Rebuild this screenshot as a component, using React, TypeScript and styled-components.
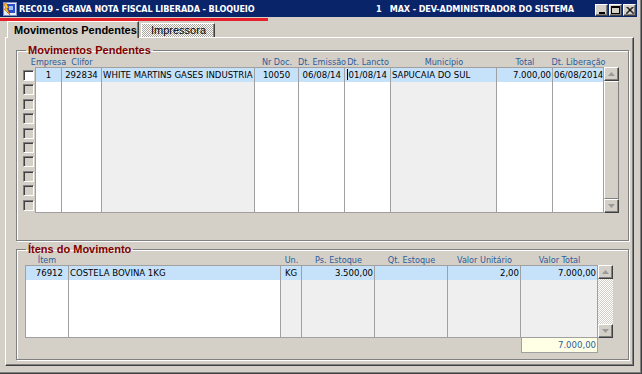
import React from 'react';
import styled, { createGlobalStyle } from 'styled-components';

const CONDENSED = '"DejaVu Sans Condensed", "Liberation Sans", Arial, sans-serif';
const SANS = '"Liberation Sans", Arial, sans-serif';

const GlobalStyle = createGlobalStyle`
	html, body {
		margin: 0;
		padding: 0;
		background: #d4d0c8;
	}
	body {
		font-family: ${CONDENSED};
		font-size: 9.5px;
		color: #000;
	}
	* {
		box-sizing: border-box;
	}
`;

const SWindow = styled.div`
	width: 642px;
	height: 374px;
	background: #d4d0c8;
	display: flex;
	flex-direction: column;
	padding: 0 4px 7px 0;
	border-right: 1px solid #404040;
	border-bottom: 1px solid #404040;
	box-shadow: inset -1px -1px 0 #808080;
	overflow: hidden;
`;

const STitleBar = styled.div`
	height: 17px;
	flex: none;
	background: #0a246a;
	display: flex;
	align-items: center;
	padding-left: 3px;
	color: #fff;
	font-family: ${CONDENSED};
	font-weight: 700;
	font-size: 9px;
	letter-spacing: -0.1px;
	white-space: pre;
`;

const STitleText = styled.span`
	margin-left: 2px;
`;

const STitleUser = styled.span`
	margin-left: auto;
`;

const SWinButtons = styled.div`
	display: flex;
	gap: 1px;
	margin-left: 21px;
	margin-right: 1px;
	align-self: flex-end;
	margin-bottom: 1px;
`;

const SWinButton = styled.div`
	width: 13px;
	height: 12px;
	background: #d4d0c8;
	border-top: 1px solid #fff;
	border-left: 1px solid #fff;
	border-right: 1px solid #404040;
	border-bottom: 1px solid #404040;
	box-shadow: inset -1px -1px 0 #808080;
	display: flex;
	align-items: center;
	justify-content: center;
`;

const SProgressRow = styled.div`
	height: 4px;
	flex: none;
	padding-top: 1px;
`;

const SProgressBar = styled.div<{ $width: number }>`
	width: ${p => p.$width}px;
	height: 3px;
	background: #e3202b;
`;

const STabs = styled.div`
	height: 16px;
	flex: none;
	display: flex;
	align-items: flex-end;
	padding-left: 7px;
`;

const STab = styled.div<{ $active?: boolean }>`
	position: relative;
	z-index: ${p => (p.$active ? 1 : 0)};
	height: ${p => (p.$active ? '17px' : '14px')};
	margin-bottom: ${p => (p.$active ? '-1px' : '0')};
	margin-left: ${p => (p.$active ? '0' : '2px')};
	width: ${p => (p.$active ? '132px' : '74px')};
	padding-left: ${p => (p.$active ? '6px' : '9px')};
	padding-top: ${p => (p.$active ? '2px' : '0')};
	font-family: ${SANS};
	font-weight: ${p => (p.$active ? 700 : 400)};
	font-size: 11px;
	line-height: 13px;
	white-space: nowrap;
	border-top: 1px solid #fff;
	border-left: 1px solid #fff;
	border-right: 1px solid #404040;
	box-shadow: inset -1px 0 0 #808080;
	background: ${p =>
		p.$active ? '#d4d0c8' : 'repeating-conic-gradient(#ffffff 0 25%, #a8a49c 0 50%) 0 0 / 2px 2px'};
`;

const SPanel = styled.div`
	flex: 1;
	margin-left: 5px;
	margin-right: 3px;
	border-top: 1px solid #fff;
	border-left: 1px solid #fff;
	border-right: 1px solid #404040;
	border-bottom: 1px solid #404040;
	box-shadow: inset -1px -1px 0 #808080;
	padding: 6px 4px 0 10px;
	display: flex;
	flex-direction: column;
	gap: 2px;
`;

const SGroup = styled.fieldset<{ $height: number }>`
	margin: 0;
	min-width: 0;
	height: ${p => p.$height}px;
	padding: 0;
	border: 1px solid #808080;
	box-shadow: 1px 1px 0 #fff, inset 1px 1px 0 #fff;
`;

const SLegend = styled.legend`
	margin-left: 9px;
	padding: 0 2px;
	font-family: ${SANS};
	font-weight: 700;
	font-size: 11px;
	line-height: 12px;
	color: #800000;
`;

const SGrid = styled.div<{ $cols: string; $rows: string; $indent: number }>`
	display: grid;
	margin-left: ${p => p.$indent}px;
	grid-template-columns: ${p => p.$cols};
	grid-template-rows: ${p => p.$rows};
`;

const SHead = styled.div<{ $col: number }>`
	grid-column: ${p => p.$col};
	grid-row: 1;
	display: flex;
	justify-content: center;
	align-items: flex-end;
	white-space: nowrap;
	font-size: 9px;
	color: #2b5d9c;
	line-height: 10px;
`;

type Tone = 'white' | 'grey' | 'sel' | 'total';
const toneBg: Record<Tone, string> = {
	white: '#ffffff',
	grey: '#efefef',
	sel: '#c6e2fa',
	total: '#ffffe6',
};

const SCell = styled.div<{
	$tone: Tone;
	$align?: 'left' | 'center' | 'right';
	$first?: boolean;
	$top?: boolean;
	$bottom?: boolean;
	$pad?: number;
}>`
	background: ${p => toneBg[p.$tone]};
	border-right: 1px solid #a0a0a0;
	border-left: ${p => (p.$first ? '1px solid #a0a0a0' : 'none')};
	border-top: ${p => (p.$top ? '1px solid #a0a0a0' : 'none')};
	border-bottom: ${p => (p.$bottom ? '1px solid #a0a0a0' : 'none')};
	text-align: ${p => p.$align || 'left'};
	padding: 0 ${p => (p.$align === 'right' ? p.$pad ?? 1 : 1)}px 0
		${p => (p.$align === 'left' || !p.$align ? p.$pad ?? 1 : 1)}px;
	line-height: 13px;
	white-space: nowrap;
	overflow: hidden;
	color: ${p => (p.$tone === 'total' ? '#2b5d9c' : '#000')};
`;

const SCaret = styled.span`
	border-left: 1px solid #000;
	margin-right: 1px;
`;

const SChecks = styled.div`
	grid-column: 1;
	grid-row: 2 / 4;
	display: flex;
	flex-direction: column;
	gap: 3.4px;
	padding-top: 3px;
`;

const SCheck = styled.div<{ $on?: boolean }>`
	width: 11px;
	height: 11px;
	border-top: 1px solid #808080;
	border-left: 1px solid #808080;
	border-right: 1px solid #fff;
	border-bottom: 1px solid #fff;
	box-shadow: inset 1px 1px 0 #404040;
	background: ${p => (p.$on ? '#fff' : '#d4d0c8')};
`;

const SScroll = styled.div<{ $col: number }>`
	grid-column: ${p => p.$col};
	grid-row: 2 / 4;
	display: flex;
	flex-direction: column;
`;

const SScrollBtn = styled.div`
	height: 14px;
	flex: none;
	background: #d4d0c8;
	border-top: 1px solid #fff;
	border-left: 1px solid #fff;
	border-right: 1px solid #404040;
	border-bottom: 1px solid #404040;
	box-shadow: inset -1px -1px 0 #808080;
	display: flex;
	align-items: center;
	justify-content: center;
`;

const SScrollThumb = styled.div`
	flex: 1;
	background: #d4d0c8;
	border-top: 1px solid #fff;
	border-left: 1px solid #fff;
	border-right: 1px solid #808080;
	border-bottom: 1px solid #808080;
`;

const SScrollTrack = styled.div`
	flex: 1;
	background: repeating-conic-gradient(#ffffff 0 25%, #d4d0c8 0 50%) 0 0 / 2px 2px;
`;

const SBlank = styled.div<{ $cols: string; $row: number }>`
	grid-column: ${p => p.$cols};
	grid-row: ${p => p.$row};
`;

const Arrow: React.FC<{ down?: boolean }> = ({ down }) => (
	<svg width="7" height="4" viewBox="0 0 7 4">
		<polygon points={down ? '0,0 7,0 3.5,4' : '3.5,0 7,4 0,4'} fill="#9a9a9a" />
	</svg>
);

const AppIcon = () => (
	<svg width="14" height="14" viewBox="0 0 14 14">
		<rect x="0.5" y="0.5" width="13" height="13" fill="#e8ecf8" stroke="#8090c0" />
		<rect x="4" y="2" width="8" height="9" fill="#2c4cc8" />
		<rect x="6" y="4" width="4" height="4" fill="#9fc0ff" />
		<polygon points="3,1 6,6 4,6 7,13 1,7 3,7 1,2" fill="#f0d020" stroke="#c03010" strokeWidth="0.5" />
	</svg>
);

type Col = {
	head: string;
	width: number;
	tone: 'white' | 'grey';
	align: 'left' | 'center' | 'right';
	value: React.ReactNode;
	pad?: number;
};

const pendentes: Col[] = [
	{ head: 'Empresa', width: 27, tone: 'white', align: 'center', value: '1' },
	{ head: 'Clifor', width: 40, tone: 'white', align: 'center', value: '292834' },
	{ head: '', width: 153, tone: 'grey', align: 'left', value: 'WHITE MARTINS GASES INDUSTRIA' },
	{ head: 'Nr Doc.', width: 44, tone: 'white', align: 'center', value: '10050' },
	{ head: 'Dt. Emissão', width: 46, tone: 'white', align: 'right', value: '06/08/14', pad: 3 },
	{
		head: 'Dt. Lancto',
		width: 46,
		tone: 'white',
		align: 'right',
		value: (
			<>
				<SCaret />
				01/08/14
			</>
		),
		pad: 3,
	},
	{ head: 'Município', width: 106, tone: 'grey', align: 'left', value: 'SAPUCAIA DO SUL' },
	{ head: 'Total', width: 56, tone: 'white', align: 'right', value: '7.000,00' },
	{ head: 'Dt. Liberação', width: 51, tone: 'white', align: 'center', value: '06/08/2014' },
];

const itens: Col[] = [
	{ head: 'Ítem', width: 44, tone: 'white', align: 'right', value: '76912', pad: 5 },
	{ head: '', width: 212, tone: 'white', align: 'left', value: 'COSTELA BOVINA 1KG' },
	{ head: 'Un.', width: 21, tone: 'grey', align: 'center', value: 'KG' },
	{ head: 'Ps. Estoque', width: 73, tone: 'grey', align: 'right', value: '3.500,00' },
	{ head: 'Qt. Estoque', width: 73, tone: 'grey', align: 'right', value: '' },
	{ head: 'Valor Unitário', width: 73, tone: 'grey', align: 'right', value: '2,00' },
	{ head: 'Valor Total', width: 77, tone: 'grey', align: 'right', value: '7.000,00' },
];

const renderColumns = (cols: Col[], offset: number) =>
	cols.map((c, i) => (
		<React.Fragment key={i}>
			{c.head && <SHead $col={i + offset}>{c.head}</SHead>}
			<SCell
				style={{ gridColumn: i + offset, gridRow: 2 }}
				$tone="sel"
				$align={c.align}
				$pad={c.pad}
				$first={i === 0}
				$top
			>
				{c.value}
			</SCell>
			<SCell style={{ gridColumn: i + offset, gridRow: 3 }} $tone={c.tone} $first={i === 0} $bottom />
		</React.Fragment>
	));

const App: React.FC = () => {
	const cols1 = `12px ${pendentes.map(c => c.width + 'px').join(' ')} 15px`;
	const cols2 = `${itens.map(c => c.width + 'px').join(' ')} 15px`;

	return (
		<>
			<GlobalStyle />
			<SWindow>
				<STitleBar>
					<AppIcon />
					<STitleText>REC019 - GRAVA NOTA FISCAL LIBERADA - BLOQUEIO</STitleText>
					<STitleUser>1   MAX - DEV-ADMINISTRADOR DO SISTEMA</STitleUser>
					<SWinButtons>
						<SWinButton>
							<svg width="6" height="7" viewBox="0 0 6 7">
								<rect x="0" y="5" width="6" height="2" fill="#000" />
							</svg>
						</SWinButton>
						<SWinButton>
							<svg width="9" height="8" viewBox="0 0 9 8">
								<rect x="0.5" y="0.5" width="8" height="7" fill="none" stroke="#000" />
								<rect x="0" y="1" width="9" height="1" fill="#000" />
							</svg>
						</SWinButton>
						<SWinButton>
							<svg width="8" height="7" viewBox="0 0 8 7">
								<path d="M0.5 0 L7.5 7 M7.5 0 L0.5 7 M1.5 0 L8 6.5 M6.5 0 L0 6.5" stroke="#000" strokeWidth="1" />
							</svg>
						</SWinButton>
					</SWinButtons>
				</STitleBar>
				<SProgressRow>
					<SProgressBar $width={268} />
				</SProgressRow>
				<STabs>
					<STab $active>Movimentos Pendentes</STab>
					<STab>Impressora</STab>
				</STabs>
				<SPanel>
					<SGroup $height={197}>
						<SLegend>Movimentos Pendentes</SLegend>
						<SGrid $indent={6} $cols={cols1} $rows="11px 15px 131px">
							<SChecks>
								{Array.from({ length: 10 }).map((_, i) => (
									<SCheck key={i} $on={i === 0} />
								))}
							</SChecks>
							{renderColumns(pendentes, 2)}
							<SScroll $col={pendentes.length + 2}>
								<SScrollBtn>
									<Arrow />
								</SScrollBtn>
								<SScrollThumb />
								<SScrollBtn>
									<Arrow down />
								</SScrollBtn>
							</SScroll>
						</SGrid>
					</SGroup>
					<SGroup $height={117}>
						<SLegend>Ítens do Movimento</SLegend>
						<SGrid $indent={8} $cols={cols2} $rows="10px 15px 58px 15px">
							{renderColumns(itens, 1)}
							<SScroll $col={itens.length + 1}>
								<SScrollBtn>
									<Arrow />
								</SScrollBtn>
								<SScrollTrack />
								<SScrollBtn>
									<Arrow down />
								</SScrollBtn>
							</SScroll>
							<SBlank $cols="1 / 7" $row={4} />
							<SCell
								style={{ gridColumn: 7, gridRow: 4 }}
								$tone="total"
								$align="right"
								$first
								$bottom
							>
								7.000,00
							</SCell>
						</SGrid>
					</SGroup>
				</SPanel>
			</SWindow>
		</>
	);
};

export default App;
